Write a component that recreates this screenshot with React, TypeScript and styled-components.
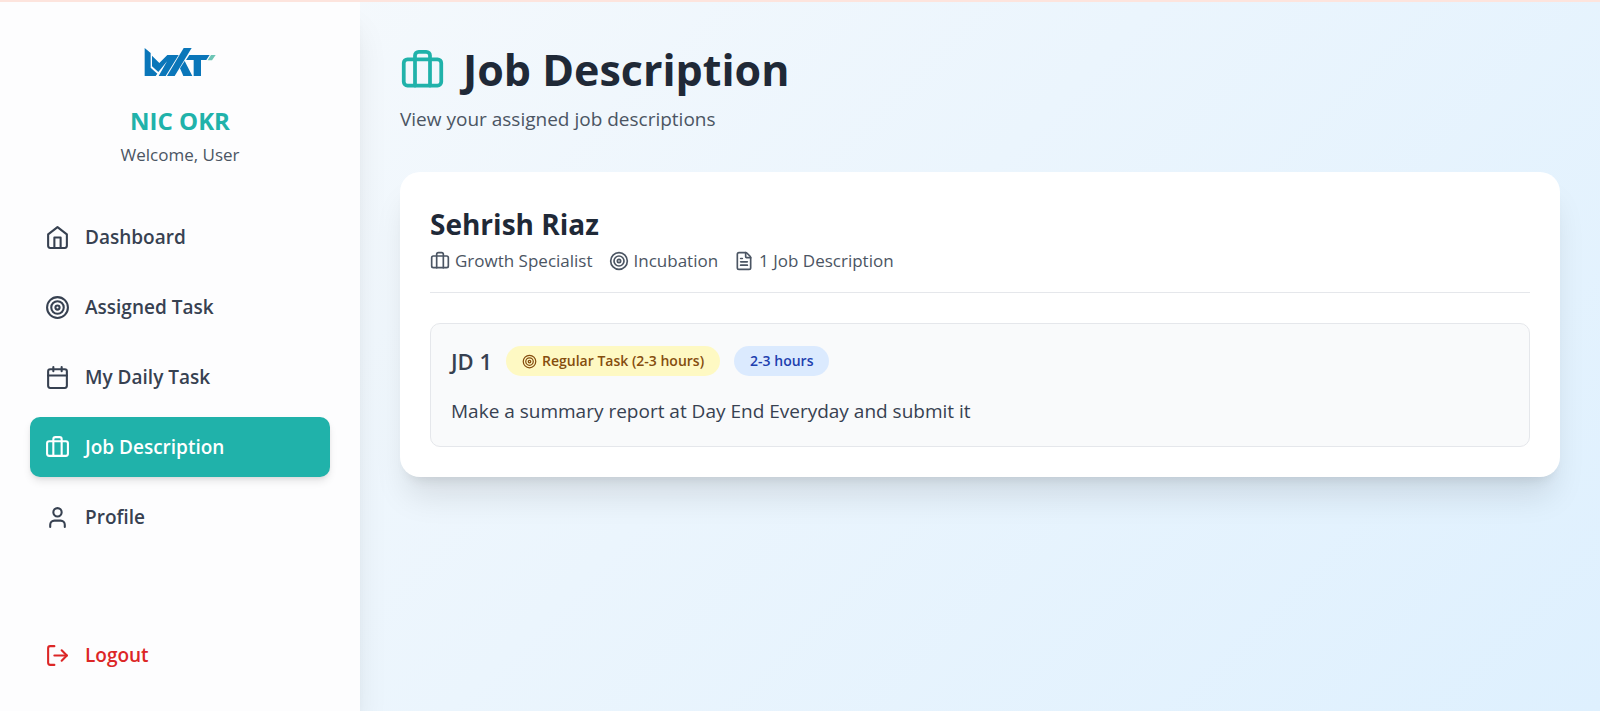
import React from "react";
import styled, { createGlobalStyle, css } from "styled-components";
import { Briefcase, Calendar, FileText, LogOut, Target, User } from "lucide-react";

const GlobalStyle = createGlobalStyle`
  *, *::before, *::after { box-sizing: border-box; }
  body { margin: 0; font-family: "Open Sans", "Noto Sans", sans-serif; color: #1f2937; }
  h1, h2, h3, p, ul { margin: 0; padding: 0; }
  svg { flex: none; display: block; }
`;

const Page = styled.div`
  display: flex;
  min-height: 100vh;
  border-top: 2px solid #fde4dd;
  background: linear-gradient(135deg, #f8fafc, #deF0fe);
`;

const Sidebar = styled.aside`
  display: flex;
  flex-direction: column;
  flex: 0 0 360px;
  padding: 43px 30px 26px;
  background: #fdfdfe;
  box-shadow: 0 25px 32px -6px rgba(0, 0, 0, 0.1), 0 10px 12px -8px rgba(0, 0, 0, 0.1);
`;

const Brand = styled.div`
  display: flex;
  flex-direction: column;
  align-items: center;
  margin-bottom: 40px;
`;

const BrandName = styled.p`
  margin-top: 24px;
  font-size: 24px;
  line-height: 36px;
  font-weight: 700;
  color: #20b2aa;
`;

const Welcome = styled.p`
  margin-top: 4px;
  font-size: 17px;
  line-height: 24px;
  color: #4b5563;
`;

const NavList = styled.ul`
  display: flex;
  flex-direction: column;
  gap: 10px;
  list-style: none;
`;

const navItem = css`
  display: flex;
  align-items: center;
  gap: 15px;
  width: 100%;
  height: 60px;
  padding: 0 15px;
  border: 0;
  border-radius: 10px;
  font-family: inherit;
  font-size: 19px;
  line-height: 28px;
  font-weight: 600;
  text-decoration: none;
  cursor: pointer;
`;

const NavLink = styled.a<{ $active?: boolean }>`
  ${navItem}
  color: ${(p) => (p.$active ? "#ffffff" : "#374151")};
  background: ${(p) => (p.$active ? "#20b2aa" : "transparent")};
  box-shadow: ${(p) => (p.$active ? "0 5px 8px -1px rgba(0,0,0,.1), 0 2px 5px -2px rgba(0,0,0,.1)" : "none")};
`;

const LogoutButton = styled.button`
  ${navItem}
  margin-top: auto;
  color: #dc2626;
  background: transparent;
`;

const Main = styled.main`
  flex: 1;
  min-width: 0;
  padding: 40px;
`;

const Title = styled.h1`
  display: flex;
  align-items: center;
  gap: 18px;
  font-size: 43px;
  line-height: 56px;
  font-weight: 700;
  color: #1f2937;
`;

const Subtitle = styled.p`
  margin-top: 6px;
  font-size: 19px;
  line-height: 30px;
  color: #4b5563;
`;

const Card = styled.section`
  margin-top: 38px;
  padding: 30px;
  border-radius: 20px;
  background: #ffffff;
  box-shadow: 0 25px 32px -6px rgba(0, 0, 0, 0.1), 0 10px 12px -8px rgba(0, 0, 0, 0.1);
`;

const CardHeader = styled.header`
  padding-bottom: 19px;
  border-bottom: 1px solid #e5e7eb;
`;

const PersonName = styled.h2`
  font-size: 28px;
  line-height: 44px;
  font-weight: 700;
`;

const MetaRow = styled.div`
  display: flex;
  flex-wrap: wrap;
  gap: 16px;
  margin-top: 3px;
`;

const Meta = styled.span`
  display: flex;
  align-items: center;
  gap: 5px;
  font-size: 17px;
  line-height: 24px;
  color: #4b5563;
`;

const JobBox = styled.article`
  margin-top: 30px;
  padding: 20px;
  border: 1px solid #e5e7eb;
  border-radius: 10px;
  background: #f9fafb;
`;

const JobHeader = styled.div`
  display: flex;
  align-items: center;
  flex-wrap: wrap;
  gap: 14px;
`;

const JobTitle = styled.h3`
  font-size: 22px;
  line-height: 34px;
  font-weight: 600;
  color: #374151;
`;

const Badge = styled.span<{ $tone: "yellow" | "blue" }>`
  display: flex;
  align-items: center;
  gap: 5px;
  padding: 4px 16px;
  border-radius: 15px;
  font-size: 14px;
  line-height: 22px;
  font-weight: 600;
  color: ${(p) => (p.$tone === "yellow" ? "#854d0e" : "#1e40af")};
  background: ${(p) => (p.$tone === "yellow" ? "#fef9c3" : "#dbeafe")};
`;

const JobText = styled.p`
  margin-top: 18px;
  font-size: 19px;
  line-height: 30px;
  color: #374151;
`;

function Logo() {
  return (
    <svg width="74" height="34" viewBox="0 0 222 102" role="img" aria-label="LMKT">
      <g fill="#0a76b9">
        <path d="M5 9 L23 24 V68 L43 86 L38 93 H5 Z" />
        <path d="M27 32 L49 54 L73 30 H107 L68 93 H47 L72 49 L46 81 L27 64 Z" />
        <path d="M122 9 H146 L95 93 H72 Z" />
        <path d="M139 30 H200 L190 45 H174 V93 H152 V45 H129 Z" />
        <path d="M125 48 L148 93 H121 L111 70 Z" />
      </g>
      <path d="M204 30 H218 L207 46 H194 Z" fill="#6cc5b5" />
    </svg>
  );
}

function HomeIcon({ size }: { size: number }) {
  return (
    <svg
      width={size}
      height={size}
      viewBox="0 0 24 24"
      fill="none"
      stroke="currentColor"
      strokeWidth="2"
      strokeLinecap="round"
      strokeLinejoin="round"
      aria-hidden="true"
    >
      <path d="m3 9 9-7 9 7v11a2 2 0 0 1-2 2H5a2 2 0 0 1-2-2z" />
      <path d="M9 22V12h6v10" />
    </svg>
  );
}

const links = [
  { label: "Dashboard", icon: HomeIcon },
  { label: "Assigned Task", icon: Target },
  { label: "My Daily Task", icon: Calendar },
  { label: "Job Description", icon: Briefcase, active: true },
  { label: "Profile", icon: User },
];

export default function App() {
  return (
    <>
      <GlobalStyle />
      <Page>
        <Sidebar>
          <Brand>
            <Logo />
            <BrandName>NIC OKR</BrandName>
            <Welcome>Welcome, User</Welcome>
          </Brand>
          <nav>
            <NavList>
              {links.map(({ label, icon: Icon, active }) => (
                <li key={label}>
                  <NavLink href="#" $active={active} aria-current={active ? "page" : undefined}>
                    <Icon size={25} />
                    {label}
                  </NavLink>
                </li>
              ))}
            </NavList>
          </nav>
          <LogoutButton type="button">
            <LogOut size={25} />
            Logout
          </LogoutButton>
        </Sidebar>
        <Main>
          <Title>
            <Briefcase size={45} color="#20b2aa" />
            Job Description
          </Title>
          <Subtitle>View your assigned job descriptions</Subtitle>
          <Card>
            <CardHeader>
              <PersonName>Sehrish Riaz</PersonName>
              <MetaRow>
                <Meta><Briefcase size={20} />Growth Specialist</Meta>
                <Meta><Target size={20} />Incubation</Meta>
                <Meta><FileText size={20} />1 Job Description</Meta>
              </MetaRow>
            </CardHeader>
            <JobBox>
              <JobHeader>
                <JobTitle>JD 1</JobTitle>
                <Badge $tone="yellow"><Target size={15} />Regular Task (2-3 hours)</Badge>
                <Badge $tone="blue">2-3 hours</Badge>
              </JobHeader>
              <JobText>Make a summary report at Day End Everyday and submit it</JobText>
            </JobBox>
          </Card>
        </Main>
      </Page>
    </>
  );
}
